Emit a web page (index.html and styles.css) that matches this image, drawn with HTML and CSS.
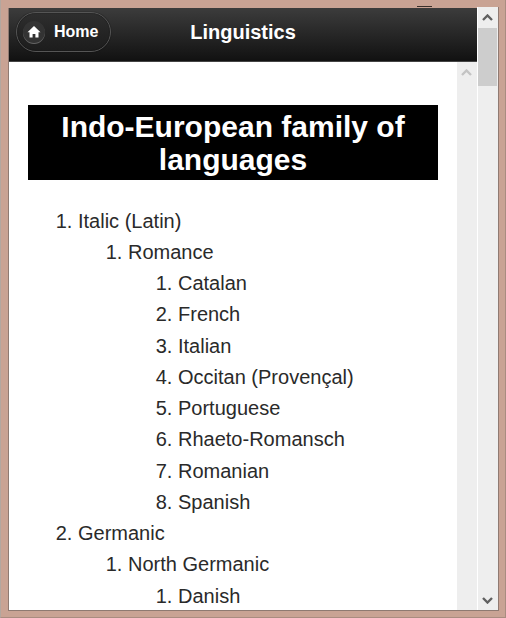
FILE: index.html
```html
<!DOCTYPE html>
<html lang="en">

<head>
    <meta charset="UTF-8">
    <meta name="viewport" content="width=device-width, initial-scale=1.0">
    <title>Linguistics</title>
    <link rel="stylesheet" href="styles.css">
</head>

<body>

    <!-- Small dark mark on the frame above the window -->
    <div class="frame-mark"></div>

    <div class="window">
        <div class="page">
            <!-- Top bar -->
            <div class="header">
                <a class="home-btn" href="#">
                    <span class="home-icon">
                        <svg width="14" height="14" viewBox="0 0 14 14"><path d="M7 1 L13.5 7.2 L11.5 7.2 L11.5 12.5 L8.4 12.5 L8.4 9 L5.6 9 L5.6 12.5 L2.5 12.5 L2.5 7.2 L0.5 7.2 Z" fill="#fff"/></svg>
                    </span>
                    <span>Home</span>
                </a>
                <h2 class="title">Linguistics</h2>
            </div>

            <div class="body-row">
                <div class="content">
                    <h1>Indo-European family of languages</h1>
                    <ol>
                        <li>Italic (Latin)
                            <ol>
                                <li>Romance
                                    <ol>
                                        <li>Catalan</li>
                                        <li>French</li>
                                        <li>Italian</li>
                                        <li>Occitan (Provençal)</li>
                                        <li>Portuguese</li>
                                        <li>Rhaeto-Romansch</li>
                                        <li>Romanian</li>
                                        <li>Spanish</li>
                                    </ol>
                                </li>
                            </ol>
                        </li>
                        <li>Germanic
                            <ol>
                                <li>North Germanic
                                    <ol>
                                        <li>Danish</li>
                                    </ol>
                                </li>
                            </ol>
                        </li>
                    </ol>
                </div>

                <!-- Inner scrollbar -->
                <div class="scrollbar inner-bar">
                    <svg class="arrow" width="11" height="7" viewBox="0 0 11 7"><path d="M1 6 L5.5 1.5 L10 6" fill="none" stroke="#c4c4c4" stroke-width="2.4"/></svg>
                </div>
            </div>
        </div>

        <!-- Outer scrollbar -->
        <div class="scrollbar outer-bar">
            <svg class="arrow" width="11" height="7" viewBox="0 0 11 7"><path d="M1 6 L5.5 1.5 L10 6" fill="none" stroke="#606060" stroke-width="2.4"/></svg>
            <div class="thumb"></div>
            <svg class="arrow arrow-down" width="11" height="7" viewBox="0 0 11 7"><path d="M1 1 L5.5 5.5 L10 1" fill="none" stroke="#606060" stroke-width="2.4"/></svg>
        </div>
    </div>

</body>

</html>
```

FILE: styles.css
```css
html,
body {
    height: 100%;
}

body {
    margin: 0;
    padding: 7px 6px 6px 7px;
    box-sizing: border-box;
    background-color: #c9a394;
    border-left: 1px solid #b3a79f;
    border-right: 1px solid #a98c80;
    border-bottom: 1px solid #a98c80;
    font-family: "Liberation Sans", Arial, sans-serif;
    overflow: hidden;
    position: relative;
}

.frame-mark {
    position: absolute;
    left: 416px;
    top: 6px;
    width: 15px;
    height: 1px;
    background-color: #3a2f2a;
}

.window {
    display: flex;
    height: 604px;
    border-bottom: 1px solid #8f7a72;
    box-sizing: border-box;
}

.page {
    flex: 1;
    min-width: 0;
    margin-top: 1px;
    border-left: 1px solid #8f7a72;
    background-color: #ffffff;
    display: flex;
    flex-direction: column;
}

.header {
    height: 54px;
    flex-shrink: 0;
    display: flex;
    align-items: flex-start;
    position: relative;
    background: linear-gradient(#3c3c3c, #111111);
    border-bottom: 1px solid #444444;
    box-sizing: border-box;
}

.home-btn {
    display: flex;
    align-items: center;
    width: 95px;
    height: 40px;
    margin: 4px 0 0 7px;
    box-sizing: border-box;
    border: 1px solid #555555;
    border-radius: 20px;
    background: linear-gradient(#2e2e2e, #1c1c1c);
    box-shadow: 0 0 1px #000000, inset 0 0 1px #000000;
    color: #ffffff;
    font-size: 16px;
    font-weight: bold;
    text-decoration: none;
}

.home-icon {
    display: flex;
    align-items: center;
    justify-content: center;
    width: 22px;
    height: 22px;
    margin: 0 9px 0 6px;
    border-radius: 50%;
    background-color: #333333;
    box-shadow: 0 1px 0 #666666;
}

.title {
    position: absolute;
    left: 0;
    right: 0;
    top: 12px;
    margin: 0;
    text-align: center;
    color: #ffffff;
    font-size: 20px;
    line-height: 25px;
}

.body-row {
    flex: 1;
    display: flex;
    min-height: 0;
}

.content {
    flex: 1;
    min-width: 0;
    overflow: hidden;
    padding: 43px 19px 0 19px;
    color: #2a2a2a;
    font-size: 20px;
    line-height: 31.25px;
}

h1 {
    margin: 0 0 25.5px 0;
    padding: 5px 0 4px 0;
    background-color: #000000;
    color: #ffffff;
    text-align: center;
    font-size: 30px;
    line-height: 33px;
}

ol {
    margin: 0;
    padding-left: 50px;
}

.scrollbar {
    width: 20px;
    flex-shrink: 0;
    background-color: #eeeeee;
    display: flex;
    flex-direction: column;
    align-items: center;
    box-sizing: content-box;
}

.inner-bar {
    padding-top: 7px;
}

.outer-bar {
    border-left: 1px solid #ffffff;
    border-right: 1px solid #8f7a72;
    padding-top: 7px;
}

.arrow {
    margin-right: 1px;
}

.thumb {
    align-self: flex-start;
    width: 19px;
    height: 58px;
    margin-top: 7px;
    background-color: #cdcdcd;
}

.arrow-down {
    margin-top: auto;
    margin-bottom: 6px;
}
```
